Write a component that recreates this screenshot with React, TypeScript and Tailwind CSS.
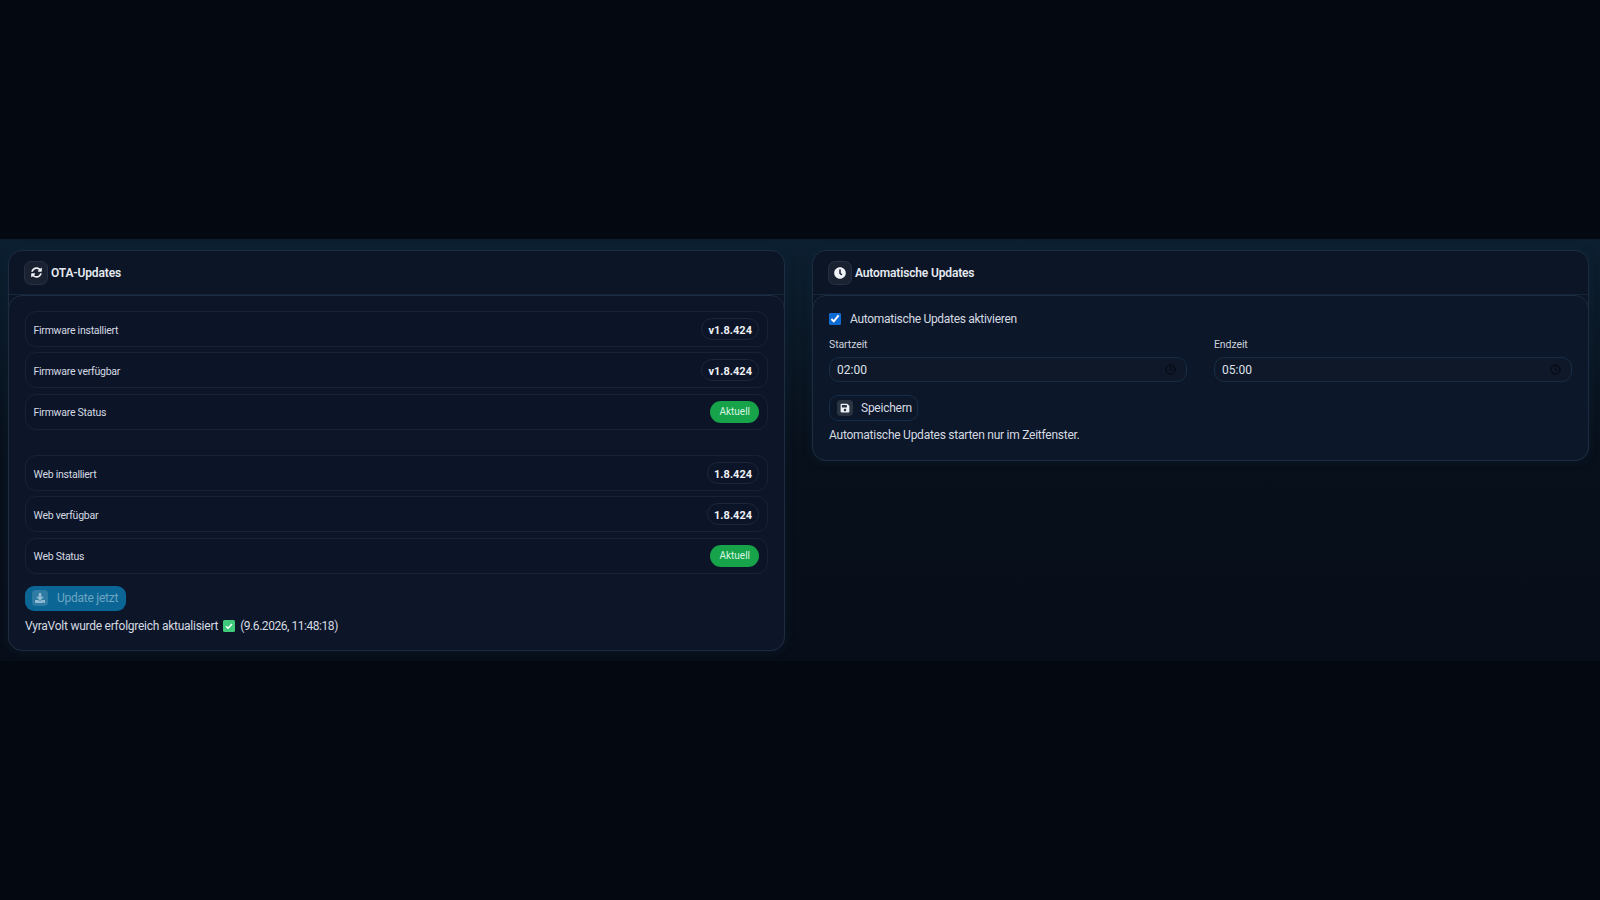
import { FaClock, FaDownload, FaSave, FaSyncAlt } from "react-icons/fa";
import { Clock } from "lucide-react";

const font = { fontFamily: 'Roboto, "Noto Sans", sans-serif' };

const firmwareRows = [
    { label: "Firmware installiert", value: "v1.8.424" },
    { label: "Firmware verfügbar", value: "v1.8.424" },
    { label: "Firmware Status", status: "Aktuell" },
];

const webRows = [
    { label: "Web installiert", value: "1.8.424" },
    { label: "Web verfügbar", value: "1.8.424" },
    { label: "Web Status", status: "Aktuell" },
];

type RowProps = { label: string; value?: string; status?: string };

const Row = ({ label, value, status }: RowProps) => (
    <div className="h-[36px] flex items-center justify-between pl-[7.5px] pr-[8px] rounded-[11px] border border-[#182235] bg-[#0c1528]">
        <span className="pt-[3px] text-[10.5px] leading-[16px] tracking-[-0.25px] text-[#d5dae2]">{label}</span>
        {value && (
            <span className="h-[22px] flex items-center pt-[3px] px-[6px] rounded-full border border-[#1c263a] text-[11px] leading-[16px] font-bold text-[#eef1f5]">{value}</span>
        )}
        {status && (
            <span className="h-[22px] flex items-center px-[9px] rounded-full bg-[#16a34a] text-[10px] text-[#d9f5e3]">{status}</span>
        )}
    </div>
);

const PanelHeader = ({ icon, title }: { icon: React.ReactNode; title: string }) => (
    <div className="h-[44px] flex items-center gap-[3px] pl-[15px] border-b border-[#16263a]">
        <span className="w-[24px] h-[24px] flex items-center justify-center rounded-[7px] bg-[#1a2232] border border-[#263044] text-[#eef1f5]">{icon}</span>
        <span className="text-[12px] font-semibold tracking-[-0.15px] text-[#e6eaf0]">{title}</span>
    </div>
);

const TimeField = ({ label, value }: { label: string; value: string }) => (
    <div className="flex flex-col">
        <label className="text-[10.5px] leading-[14px] tracking-[-0.1px] mb-[5px] text-[#ccd2dc]">{label}</label>
        <div className="h-[25px] flex items-center justify-between pl-[7px] pr-[10px] rounded-[10px] border border-[#172d47] bg-[#0e1829]">
            <span className="text-[12px] text-[#dde2ea]">{value}</span>
            <Clock size={11} strokeWidth={2} className="text-[#04070c]" />
        </div>
    </div>
);

const App = () => {
    return (
        <div style={font} className="min-h-screen flex items-center bg-[#040810]">
            <div className="w-full h-[422px] grid grid-cols-[777px_777px] gap-[27px] items-start pl-2 pt-[11px] bg-gradient-to-b from-[#0c1f30] via-[#08101b] via-50% to-[#070e19]">
                <section className="rounded-[14px] border border-[#1d2c40] bg-[#0b1526] shadow-[0_0_10px_rgba(16,50,76,0.3)]">
                    <PanelHeader icon={<FaSyncAlt size={11} />} title="OTA-Updates" />
                    <div className="h-[356px] -mx-px -mb-px px-[16px] pt-[15px] rounded-[14px] border border-[#1d2c40] bg-[#0c1628]">
                        <div className="flex flex-col gap-[5.3px]">
                            {firmwareRows.map((row) => <Row key={row.label} {...row} />)}
                        </div>
                        <div className="flex flex-col gap-[5.3px] mt-[25.5px]">
                            {webRows.map((row) => <Row key={row.label} {...row} />)}
                        </div>
                        <button className="mt-[12px] h-[25px] w-[101px] flex items-center gap-[9px] pl-[7px] rounded-[9px] bg-[#0b6595] text-[12px] tracking-[-0.25px] text-[#6ea5c2]">
                            <span className="w-[16px] h-[16px] flex items-center justify-center rounded-[4px] bg-[#2f7ba3] text-[#8fbcd3]"><FaDownload size={10} /></span>
                            Update jetzt
                        </button>
                        <p className="mt-[7px] flex items-center text-[12px] leading-[16px] tracking-[-0.25px] text-[#d5dae2]">
                            VyraVolt wurde erfolgreich aktualisiert
                            <svg className="mx-[5px]" width="12" height="12" viewBox="0 0 12 12">
                                <rect width="12" height="12" rx="1.5" fill="#3fc97a" />
                                <path d="M3 6.2l2.1 2.1L9 4" fill="none" stroke="#fff" strokeWidth="1.4" />
                            </svg>
                            <span className="tracking-[-0.45px]">(9.6.2026, 11:48:18)</span>
                        </p>
                    </div>
                </section>

                <section className="rounded-[14px] border border-[#1d2c40] bg-[#0b1526] shadow-[0_0_10px_rgba(16,50,76,0.3)]">
                    <PanelHeader icon={<FaClock size={12} />} title="Automatische Updates" />
                    <div className="h-[166px] -mx-px -mb-px px-[16px] pt-[17px] rounded-[14px] border border-[#1d2c40] bg-[#0c1729]">
                        <label className="flex items-center gap-[9px] text-[12px] leading-[12px] tracking-[-0.3px] text-[#d5dae2]">
                            <input type="checkbox" defaultChecked className="w-[12px] h-[12px] accent-[#0b6bd3]" />
                            Automatische Updates aktivieren
                        </label>
                        <div className="grid grid-cols-2 gap-[27px] mt-[13px]">
                            <TimeField label="Startzeit" value="02:00" />
                            <TimeField label="Endzeit" value="05:00" />
                        </div>
                        <button className="mt-[13px] h-[26px] flex items-center gap-[8px] pl-[7px] pr-[5px] rounded-[9px] border border-[#172d47] text-[12px] tracking-[-0.25px] text-[#d5dae2]">
                            <span className="w-[16px] h-[16px] flex items-center justify-center rounded-[4px] bg-[#2a3342] text-[#eef1f5]"><FaSave size={10} /></span>
                            Speichern
                        </button>
                        <p className="mt-[6px] text-[12px] leading-[16px] tracking-[-0.25px] text-[#d5dae2]">Automatische Updates starten nur im Zeitfenster.</p>
                    </div>
                </section>
            </div>
        </div>
    );
};

export default App;
